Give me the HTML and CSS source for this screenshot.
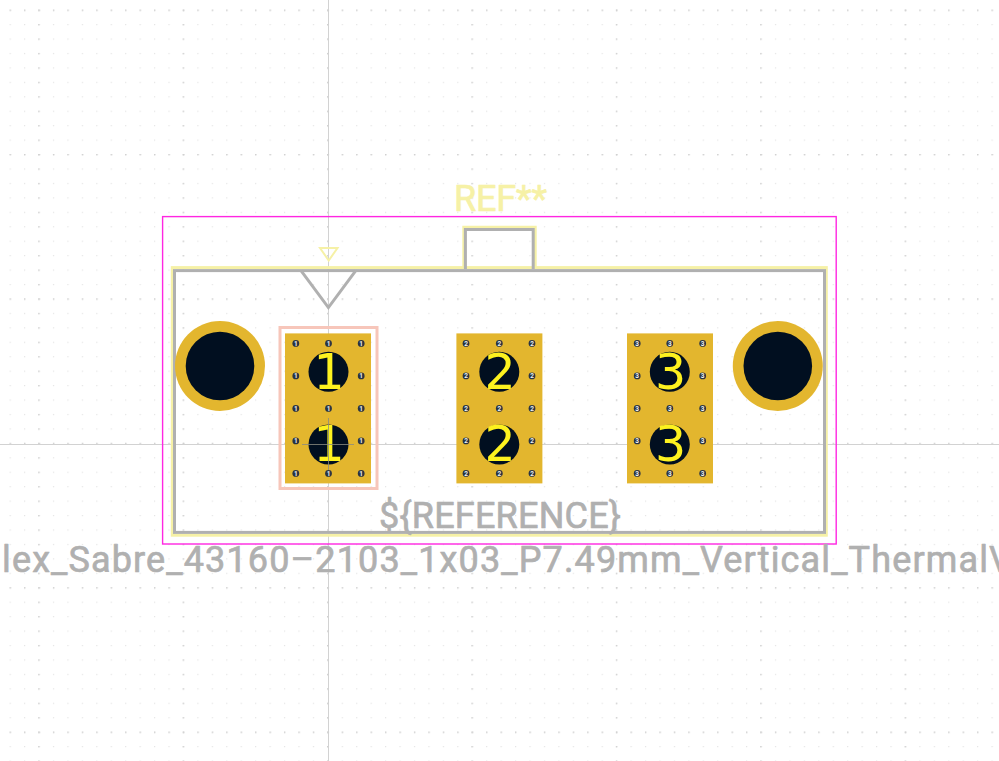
FILE: index.html
```html
<!DOCTYPE html>
<html lang="en">
<head>
<meta charset="utf-8">
<title>Footprint editor</title>
<link rel="stylesheet" href="styles.css">
</head>
<body>
<svg class="canvas" width="999" height="761" viewBox="0 0 999 761" xmlns="http://www.w3.org/2000/svg">
  <defs>
    <pattern id="g-minor" patternUnits="userSpaceOnUse" x="9.6" y="9.6" width="14.44" height="14.44"><rect class="dot-minor" width="1.2" height="1.2"/></pattern>
    <pattern id="g-col" patternUnits="userSpaceOnUse" x="38.2" y="9.6" width="144.4" height="14.44"><rect class="dot-major" width="1.4" height="1.4"/></pattern>
    <pattern id="g-row" patternUnits="userSpaceOnUse" x="9.6" y="9.6" width="14.44" height="144.4"><rect class="dot-major" width="1.4" height="1.4"/></pattern>
  </defs>

  <g class="grid">
    <rect width="999" height="761" fill="url(#g-minor)"/>
    <rect width="999" height="761" fill="url(#g-col)"/>
    <rect width="999" height="761" fill="url(#g-row)"/>
  </g>

  <line class="cross" x1="328.5" y1="0" x2="328.5" y2="761"/>
  <line class="cross" x1="0" y1="444.5" x2="999" y2="444.5"/>

  <rect class="courtyard" x="162.6" y="216.6" width="673.6" height="327.4"/>

  <rect class="silk" x="172.3" y="267.6" width="654" height="267.6"/>
  <path class="silk" d="M463.8 267V227.2H535.2V267"/>
  <path class="silk thin" d="M320 248H337.5L328.7 260.5Z"/>

  <rect class="fab" x="174.5" y="270.6" width="650" height="261.8"/>
  <path class="fab" d="M465.4 269V229.6H533.2V269"/>
  <path class="fab" d="M301 270.6L328.4 307.6L355.8 270.6"/>

  <rect class="pad-court" x="280" y="327.5" width="97" height="161"/>

  <rect class="pad" x="285" y="333.4" width="86" height="150"/>
  <rect class="pad" x="456.4" y="333.4" width="86" height="150"/>
  <rect class="pad" x="627" y="333.4" width="86" height="150"/>
  <circle class="pad" cx="220" cy="366" r="45"/>
  <circle class="pad" cx="777.8" cy="366" r="45"/>

  <circle class="hole" cx="220" cy="366" r="34.3"/>
  <circle class="hole" cx="777.8" cy="366" r="34.3"/>
  <circle class="hole" cx="328.5" cy="371.8" r="20"/>
  <circle class="hole" cx="328.5" cy="444.4" r="20"/>
  <circle class="hole" cx="499.3" cy="371.8" r="20"/>
  <circle class="hole" cx="499.3" cy="444.4" r="20"/>
  <circle class="hole" cx="669.8" cy="371.8" r="20"/>
  <circle class="hole" cx="669.8" cy="444.4" r="20"/>

  <g class="vias">
    <circle cx="295.8" cy="343.4"/><circle cx="328.5" cy="343.4"/><circle cx="361.2" cy="343.4"/>
    <circle cx="295.8" cy="375.9"/><circle cx="361.2" cy="375.9"/>
    <circle cx="295.8" cy="408.4"/><circle cx="328.5" cy="408.4"/><circle cx="361.2" cy="408.4"/>
    <circle cx="295.8" cy="440.9"/><circle cx="361.2" cy="440.9"/>
    <circle cx="295.8" cy="473.4"/><circle cx="328.5" cy="473.4"/><circle cx="361.2" cy="473.4"/>

    <circle cx="466" cy="343.4"/><circle cx="499.3" cy="343.4"/><circle cx="532" cy="343.4"/>
    <circle cx="466" cy="375.9"/><circle cx="532" cy="375.9"/>
    <circle cx="466" cy="408.4"/><circle cx="499.3" cy="408.4"/><circle cx="532" cy="408.4"/>
    <circle cx="466" cy="440.9"/><circle cx="532" cy="440.9"/>
    <circle cx="466" cy="473.4"/><circle cx="499.3" cy="473.4"/><circle cx="532" cy="473.4"/>

    <circle cx="637.2" cy="343.4"/><circle cx="669.8" cy="343.4"/><circle cx="702.7" cy="343.4"/>
    <circle cx="637.2" cy="375.9"/><circle cx="702.7" cy="375.9"/>
    <circle cx="637.2" cy="408.4"/><circle cx="669.8" cy="408.4"/><circle cx="702.7" cy="408.4"/>
    <circle cx="637.2" cy="440.9"/><circle cx="702.7" cy="440.9"/>
    <circle cx="637.2" cy="473.4"/><circle cx="669.8" cy="473.4"/><circle cx="702.7" cy="473.4"/>
  </g>

  <g class="via-nums">
    <text x="295.8" y="345.5">1</text><text x="328.5" y="345.5">1</text><text x="361.2" y="345.5">1</text>
    <text x="295.8" y="378">1</text><text x="361.2" y="378">1</text>
    <text x="295.8" y="410.5">1</text><text x="328.5" y="410.5">1</text><text x="361.2" y="410.5">1</text>
    <text x="295.8" y="443">1</text><text x="361.2" y="443">1</text>
    <text x="295.8" y="475.5">1</text><text x="328.5" y="475.5">1</text><text x="361.2" y="475.5">1</text>

    <text x="466" y="345.5">2</text><text x="499.3" y="345.5">2</text><text x="532" y="345.5">2</text>
    <text x="466" y="378">2</text><text x="532" y="378">2</text>
    <text x="466" y="410.5">2</text><text x="499.3" y="410.5">2</text><text x="532" y="410.5">2</text>
    <text x="466" y="443">2</text><text x="532" y="443">2</text>
    <text x="466" y="475.5">2</text><text x="499.3" y="475.5">2</text><text x="532" y="475.5">2</text>

    <text x="637.2" y="345.5">3</text><text x="669.8" y="345.5">3</text><text x="702.7" y="345.5">3</text>
    <text x="637.2" y="378">3</text><text x="702.7" y="378">3</text>
    <text x="637.2" y="410.5">3</text><text x="669.8" y="410.5">3</text><text x="702.7" y="410.5">3</text>
    <text x="637.2" y="443">3</text><text x="702.7" y="443">3</text>
    <text x="637.2" y="475.5">3</text><text x="669.8" y="475.5">3</text><text x="702.7" y="475.5">3</text>
  </g>

  <g class="pad-nums">
    <text x="329" y="388.5">1</text>
    <text x="329" y="461">1</text>
    <text x="500" y="388.5">2</text>
    <text x="500" y="461">2</text>
    <text x="670.5" y="388.5">3</text>
    <text x="670.5" y="461">3</text>
  </g>

  <path class="origin" d="M302 444.5H354M328.5 418V470"/>

  <text class="ref" x="454" y="211" textLength="93" lengthAdjust="spacing">REF**</text>
  <text class="label" x="379" y="528" textLength="242" lengthAdjust="spacing">${REFERENCE}</text>
  <text class="label" x="2" y="572" textLength="1010" lengthAdjust="spacing">lex_Sabre_43160–2103_1x03_P7.49mm_Vertical_ThermalV</text>
</svg>
</body>
</html>
```

FILE: styles.css
```css
html, body {
  margin: 0;
  padding: 0;
  background: #ffffff;
}

.canvas {
  display: block;
}

.dot-minor { fill: #e4e4e4; }
.dot-major { fill: #d0d0d0; }

.cross {
  stroke: #d2d2d2;
  stroke-width: 1;
}

.courtyard {
  fill: none;
  stroke: #ff26e2;
  stroke-width: 1.4;
}

.silk {
  fill: none;
  stroke: #f6f1a6;
  stroke-width: 3;
}

.silk.thin {
  stroke-width: 2;
}

.fab {
  fill: none;
  stroke: #b0b0b0;
  stroke-width: 3;
}

.pad-court {
  fill: none;
  stroke: #f7c6ba;
  stroke-width: 3;
}

.pad {
  fill: #e3b62e;
}

.hole {
  fill: #010f20;
}

.vias circle {
  r: 3.4px;
  fill: #2a3442;
}

.via-nums text {
  font-family: "Roboto", sans-serif;
  font-size: 6.5px;
  font-weight: 700;
  fill: #f0f0f0;
  text-anchor: middle;
}

.pad-nums text {
  font-family: "DejaVu Sans", sans-serif;
  font-size: 49px;
  fill: #fdf21f;
  text-anchor: middle;
}

.origin {
  fill: none;
  stroke: #8b8b80;
  stroke-width: 1;
  opacity: 0.8;
}

.ref {
  font-family: "Roboto", sans-serif;
  font-size: 36px;
  font-weight: 400;
  fill: #f6f1a6;
  stroke: #f6f1a6;
  stroke-width: 0.7;
  stroke-linejoin: round;
}

.label {
  font-family: "Roboto", sans-serif;
  font-size: 36px;
  font-weight: 400;
  fill: #b0b0b0;
  stroke: #b0b0b0;
  stroke-width: 0.7;
  stroke-linejoin: round;
}
```
